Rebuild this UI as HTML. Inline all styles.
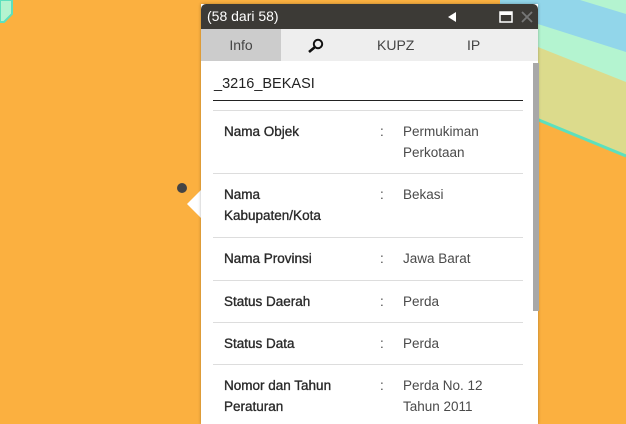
<!DOCTYPE html>
<html><head><style>
body{margin:0;width:626px;height:420px;overflow:hidden;background:#fbb040;font-family:"Liberation Sans",sans-serif;position:relative}
.a{position:absolute}
.t{font-size:13.5px;color:#333}
.l{color:#2a2a2a;font-size:13.5px;-webkit-text-stroke:0.35px #2a2a2a}
.v{color:#4a4a4a;font-size:13.5px}
.sep{position:absolute;left:213px;width:310px;height:1px;background:#ddd}
</style></head><body>
<svg class="a" style="left:0;top:0" width="626" height="420">
<polygon points="538,-60 626,-25 626,420 538,420" fill="#fbb040"/>
<polygon points="500,-60 626,-10 626,156 500,104" fill="#dcdb8c"/>
<polygon points="500,-60 626,-10 626,82 500,32" fill="#b4f4d0"/>
<polygon points="500,-60 626,-10 626,52 500,12" fill="#92d6ea"/>
<polygon points="580,0 626,0 626,14 " fill="#b4f4d0"/>
<line x1="500" y1="104" x2="626" y2="156" stroke="#5de0bd" stroke-width="3"/>
<path d="M0,0 H12 V14 L4,22 H0 Z" fill="#b4f4d0" stroke="#5de0bd" stroke-width="2"/>
<circle cx="182" cy="188" r="5" fill="#444"/>
<polygon points="202,189 187,204 202,219" fill="#fff"/>
</svg>
<div class="a" style="left:201px;top:4px;width:337px;height:420px;background:#fff;box-shadow:0 0 3px rgba(0,0,0,.3)"></div>
<div class="a" style="left:201px;top:4px;width:337px;height:25px;background:#3c3a36;border-radius:5px 5px 0 0;color:#fff;font-size:14px;line-height:25px"><span style="margin-left:6px">(58 dari 58)</span>
<svg class="a" style="left:244px;top:6px" width="90" height="14"><polygon points="3,7 11,2 11,12" fill="#fff"/><rect x="55" y="2" width="12" height="10" fill="none" stroke="#fff" stroke-width="1.5"/><rect x="55" y="2" width="12" height="3" fill="#fff"/><path d="M77,2 L87,12 M87,2 L77,12" stroke="#777" stroke-width="1.8"/></svg></div>
<div class="a" style="left:201px;top:29px;width:337px;height:32px;background:#eeeeee;font-size:14px;color:#444;line-height:32px">
<div class="a" style="left:0;width:80px;height:32px;background:#cccccc;text-align:center">Info</div>
<svg class="a" style="left:106px;top:9px" width="18" height="16"><circle cx="11" cy="6" r="4.2" fill="none" stroke="#111" stroke-width="2"/><line x1="8" y1="9" x2="2" y2="14" stroke="#111" stroke-width="2.6"/></svg>
<div class="a" style="left:176px">KUPZ</div><div class="a" style="left:266px">IP</div></div>
<div class="a" style="left:533px;top:63px;width:6px;height:248px;background:#a8a8a8"></div>
<div class="a t" style="left:214px;top:76px;font-size:14.5px;color:#222">_3216_BEKASI</div>
<div class="a" style="left:213px;top:100px;width:310px;height:1px;background:#222"></div>
<div class="sep" style="top:110px"></div><div class="sep" style="top:173px"></div><div class="sep" style="top:237px"></div><div class="sep" style="top:280px"></div><div class="sep" style="top:322px"></div><div class="sep" style="top:364px"></div>
<div class="a" style="left:0;top:0;width:626px;line-height:21px">
<div class="a l" style="left:224px;top:121px">Nama Objek</div><div class="a v" style="left:380px;top:121px">:</div><div class="a v" style="left:403px;top:121px">Permukiman<br>Perkotaan</div>
<div class="a l" style="left:224px;top:184px">Nama<br>Kabupaten/Kota</div><div class="a v" style="left:380px;top:184px">:</div><div class="a v" style="left:403px;top:184px">Bekasi</div>
<div class="a l" style="left:224px;top:248px">Nama Provinsi</div><div class="a v" style="left:380px;top:248px">:</div><div class="a v" style="left:403px;top:248px">Jawa Barat</div>
<div class="a l" style="left:224px;top:291px">Status Daerah</div><div class="a v" style="left:380px;top:291px">:</div><div class="a v" style="left:403px;top:291px">Perda</div>
<div class="a l" style="left:224px;top:333px">Status Data</div><div class="a v" style="left:380px;top:333px">:</div><div class="a v" style="left:403px;top:333px">Perda</div>
<div class="a l" style="left:224px;top:375px">Nomor dan Tahun<br>Peraturan</div><div class="a v" style="left:380px;top:375px">:</div><div class="a v" style="left:403px;top:375px">Perda No. 12<br>Tahun 2011</div>
</div>
</body></html>
